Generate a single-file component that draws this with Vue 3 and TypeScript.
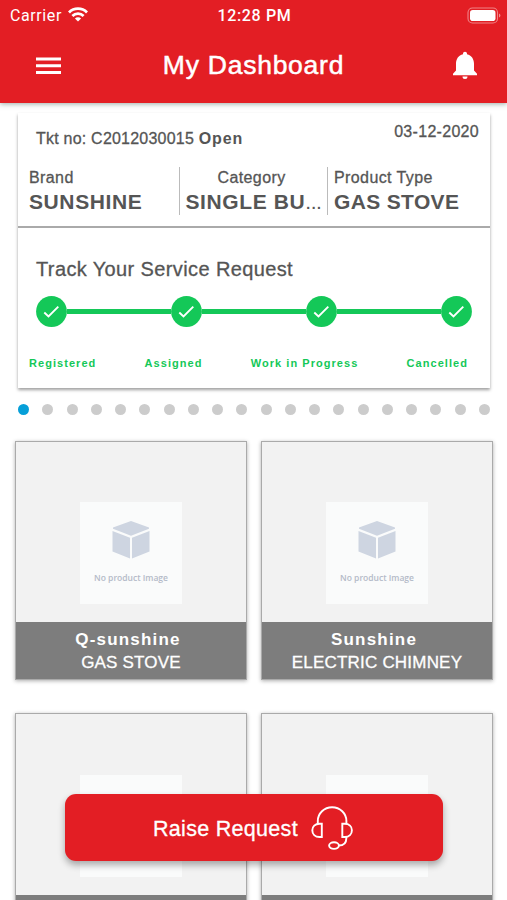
<script setup lang="ts">
interface Product {
  name: string
  type: string
}

const steps: string[] = ['Registered', 'Assigned', 'Work in Progress', 'Cancelled']
const pageCount = 20
const activePage = 1
const products: Product[] = [
  { name: 'Q-sunshine', type: 'GAS STOVE' },
  { name: 'Sunshine', type: 'ELECTRIC CHIMNEY' },
  { name: '', type: '' },
  { name: '', type: '' },
]
</script>

<template>
  <div class="screen">
    <header class="header">
      <div class="status">
        <div class="carrier">
          <span>Carrier</span>
          <svg class="wifi" width="20" height="15" viewBox="0 0 20 15" fill="none" stroke="#fff" stroke-width="2.8">
            <path d="M1 5.4a12.8 12.8 0 0 1 18 0" />
            <path d="M4.4 8.9a8 8 0 0 1 11.2 0" />
            <path d="M10 14.6 6.9 11.5a4.4 4.4 0 0 1 6.2 0z" fill="#fff" stroke="none" />
          </svg>
        </div>
        <span class="clock">12:28 PM</span>
        <svg class="battery" width="34" height="17" viewBox="0 0 34 17">
          <rect x="1" y="1" width="29.5" height="15" rx="4.5" fill="none" stroke="#fff" stroke-opacity=".45" stroke-width="1.1" />
          <rect x="3" y="3" width="25.5" height="11" rx="2.8" fill="#fff" />
          <path d="M32 6.5v4q1.4-.6 1.4-2t-1.4-2z" fill="#fff" fill-opacity=".5" />
        </svg>
      </div>
      <div class="toolbar">
        <svg width="25" height="18" viewBox="0 0 25 18" fill="#fff">
          <path d="M0 .5h25v3H0zM0 7.3h25v3H0zM0 14.1h25v3H0z" />
        </svg>
        <h1 class="title">My Dashboard</h1>
        <svg class="bell" width="24" height="29" viewBox="0 0 24 29" fill="#fff">
          <path d="M12 .8c1.2 0 2 .8 2 2v.5c4.500 1 7 4.700 7 9.500v6.700l3 3.300v1.500H0v-1.500l3-3.300v-6.700C3 8 5.500 4.300 10 3.300v-.5c0-1.200.8-2 2-2zM9.500 25.500h5a2.500 2.500 0 0 1-5 0z" />
        </svg>
      </div>
    </header>

    <main class="content">
      <section class="ticket">
        <div class="summary">
          <div class="meta">
            <span class="number">Tkt no: C2012030015 <b>Open</b></span>
            <span class="date">03-12-2020</span>
          </div>
          <div class="facts">
            <div class="fact brand"><span>Brand</span><strong>SUNSHINE</strong></div>
            <div class="fact category"><span>Category</span><strong>SINGLE BU<i>...</i></strong></div>
            <div class="fact type"><span>Product Type</span><strong>GAS STOVE</strong></div>
          </div>
        </div>
        <div class="tracker">
          <h2 class="track-title">Track Your Service Request</h2>
          <div class="line">
            <template v-for="(step, i) in steps" :key="step">
              <span v-if="i" class="bar"></span>
              <svg class="check" width="31" height="31" viewBox="0 0 31 31">
                <circle cx="15.500" cy="15.500" r="15.400" fill="#14c858" />
                <path d="M8.300 16.500l4.200 4L22.300 10.700" fill="none" stroke="#fff" stroke-width="1.900" />
              </svg>
            </template>
          </div>
          <div class="labels">
            <span v-for="step in steps" :key="step">{{ step }}</span>
          </div>
        </div>
      </section>

      <div class="dots">
        <span v-for="n in pageCount" :key="n" class="dot" :class="{ active: n === activePage }"></span>
      </div>

      <section class="grid">
        <article v-for="(p, i) in products" :key="i" class="product">
          <div class="picture">
            <div class="placeholder">
              <svg width="38" height="38" viewBox="0 0 38 38" fill="#ced5e1">
                <path d="M19 0 37 6.500v1.300L19 14.700 1 7.800V6.500z" />
                <path d="M.5 10 18 16.800V37.500L.5 30.500z" />
                <path d="M37.500 10 20 16.800V37.500l17.500-7z" />
              </svg>
              <span>No product Image</span>
            </div>
          </div>
          <div class="caption">
            <strong>{{ p.name }}</strong>
            <span>{{ p.type }}</span>
          </div>
        </article>
      </section>
    </main>

    <button class="raise">
      <span>Raise Request</span>
      <svg width="42" height="44" viewBox="0 0 42 44" fill="none" stroke="#fff" stroke-width="1.900">
        <path d="M6.800 17.500V15a14.300 13.800 0 0 1 28.600 0v2.500" />
        <path d="M10.800 17.800H8.500C4 17.800 1.300 20.600 1.300 24.300S4 31 8.500 31h2.300z" />
        <path d="M31.300 17.800h2.400c4.500 0 7.200 2.800 7.200 6.500S38.200 31 33.700 31h-2.400z" />
        <path d="M35.300 31v1.500c0 4.500-3 7-7.500 7" />
        <ellipse cx="23" cy="39.600" rx="4.900" ry="3.300" />
      </svg>
    </button>
  </div>
</template>

<style>
body {
  margin: 0;
  overflow: hidden;
}
</style>

<style scoped>
.screen {
  position: relative;
  width: 507px;
  height: 900px;
  overflow: hidden;
  background: #fff;
  color: #555;
  font-family: "Liberation Sans", Arial, sans-serif;
}
.header {
  position: relative;
  box-sizing: border-box;
  height: 103px;
  background: #e31e24;
  color: #fff;
  box-shadow: 0 1px 5px rgba(60, 90, 80, 0.5);
}
.status {
  display: grid;
  grid-template-columns: 1fr auto 1fr;
  align-items: center;
  height: 29px;
  padding: 0 6px 0 10px;
  font: 16px/29px Roboto, sans-serif;
}
.carrier {
  display: flex;
  align-items: center;
  gap: 6px;
  padding-top: 1px;
  letter-spacing: 0.6px;
}
.wifi {
  margin-top: -2px;
}
.clock {
  padding-top: 1px;
  padding-right: 2px;
  font-weight: 500;
  letter-spacing: 0.65px;
}
.battery {
  justify-self: end;
}
.toolbar {
  display: flex;
  justify-content: space-between;
  align-items: center;
  height: 74px;
  padding: 0 30px 0 36px;
}
.title {
  margin: -1px 0 0;
  padding-right: 7px;
  font-size: 26.5px;
  font-weight: 400;
  letter-spacing: 0.75px;
  -webkit-text-stroke: 0.5px;
}
.bell {
  margin-top: -2px;
}
.content {
  padding: 10px 14px 0 15px;
}
.ticket {
  height: 275px;
  margin: 0 3px;
  background: #fff;
  box-shadow: 0 2px 3px rgba(0, 0, 0, 0.38);
}
.summary {
  box-sizing: border-box;
  height: 115px;
  padding: 10px 11px 0 11px;
  border-bottom: 2px solid #aaa;
}
.meta {
  display: flex;
  justify-content: space-between;
  padding-left: 7px;
  height: 44px;
  font-size: 16px;
  line-height: 18px;
  letter-spacing: 0.22px;
  -webkit-text-stroke: 0.3px;
}
.number {
  padding-top: 7px;
}
.number b {
  letter-spacing: 0.9px;
  -webkit-text-stroke: 0;
}
.date {
  letter-spacing: 0.3px;
}
.facts {
  display: grid;
  grid-template-columns: 151px 148px 1fr;
  height: 48px;
}
.fact {
  display: flex;
  flex-direction: column;
  font-size: 16px;
  line-height: 22px;
  letter-spacing: 0.4px;
}
.fact span {
  -webkit-text-stroke: 0.3px;
}
.fact strong {
  font-size: 21px;
  line-height: 25px;
  letter-spacing: 0.6px;
  white-space: nowrap;
}
.fact i {
  font-style: normal;
  font-weight: 400;
  letter-spacing: -0.4px;
}
.brand,
.category {
  border-right: 1px solid #bbb;
}
.category {
  align-items: center;
  padding-right: 4px;
}
.category strong {
  margin-right: -4px;
}
.type {
  padding-left: 6px;
}
.type strong {
  letter-spacing: 0.35px;
}
.tracker {
  padding: 29px 18px 0;
}
.track-title {
  margin: 0;
  font-size: 20px;
  font-weight: 400;
  line-height: 24px;
  letter-spacing: 0.38px;
  -webkit-text-stroke: 0.3px;
}
.line {
  display: flex;
  align-items: center;
  margin-top: 15px;
}
.check {
  flex: none;
}
.bar {
  flex: 1;
  height: 5px;
  background: #14c858;
}
.labels {
  display: flex;
  justify-content: space-between;
  margin: 28px 4px 0 -7px;
  color: #14c858;
  font-size: 11px;
  font-weight: 700;
  line-height: 16px;
  letter-spacing: 1.05px;
}
.dots {
  display: flex;
  justify-content: space-between;
  margin: 16px 3px 0 3px;
}
.dot {
  width: 11px;
  height: 11px;
  border-radius: 50%;
  background: #ccc;
}
.dot.active {
  background: #069fd8;
}
.grid {
  display: grid;
  grid-template-columns: repeat(2, 232px);
  gap: 33px 14px;
  margin-top: 25.5px;
}
.product {
  box-sizing: border-box;
  height: 239.5px;
  border: 1px solid #aaa;
  background: #f2f2f2;
  box-shadow: 0 1px 4px rgba(0, 0, 0, 0.32);
}
.picture {
  display: flex;
  justify-content: center;
  height: 180.5px;
}
.placeholder {
  display: flex;
  flex-direction: column;
  align-items: center;
  box-sizing: border-box;
  width: 102px;
  height: 102px;
  margin-top: 60.5px;
  padding-top: 19px;
  background: #fafbfb;
  color: #b4bac8;
  font: 600 8.5px/12px "Open Sans", sans-serif;
}
.placeholder span {
  margin-top: 13px;
  white-space: nowrap;
}
.caption {
  display: flex;
  flex-direction: column;
  align-items: center;
  box-sizing: border-box;
  height: 57px;
  padding-top: 5.5px;
  background: #7d7d7d;
  color: #fff;
  font-size: 17px;
  line-height: 23px;
}
.caption strong {
  padding-right: 6px;
  letter-spacing: 1.2px;
}
.caption span {
  letter-spacing: 0.2px;
  -webkit-text-stroke: 0.3px;
}
.raise {
  position: absolute;
  left: 65px;
  top: 794px;
  display: flex;
  align-items: center;
  gap: 13px;
  box-sizing: border-box;
  width: 378px;
  height: 67px;
  padding: 0 0 0 88px;
  border: 0;
  border-radius: 11px;
  background: #e31e24;
  color: #fff;
  font: 21.5px "Liberation Sans", Arial, sans-serif;
  letter-spacing: 0.3px;
  box-shadow: 0 4px 7px rgba(0, 0, 0, 0.32);
}
.raise span {
  padding-top: 3px;
  -webkit-text-stroke: 0.3px;
}
</style>
